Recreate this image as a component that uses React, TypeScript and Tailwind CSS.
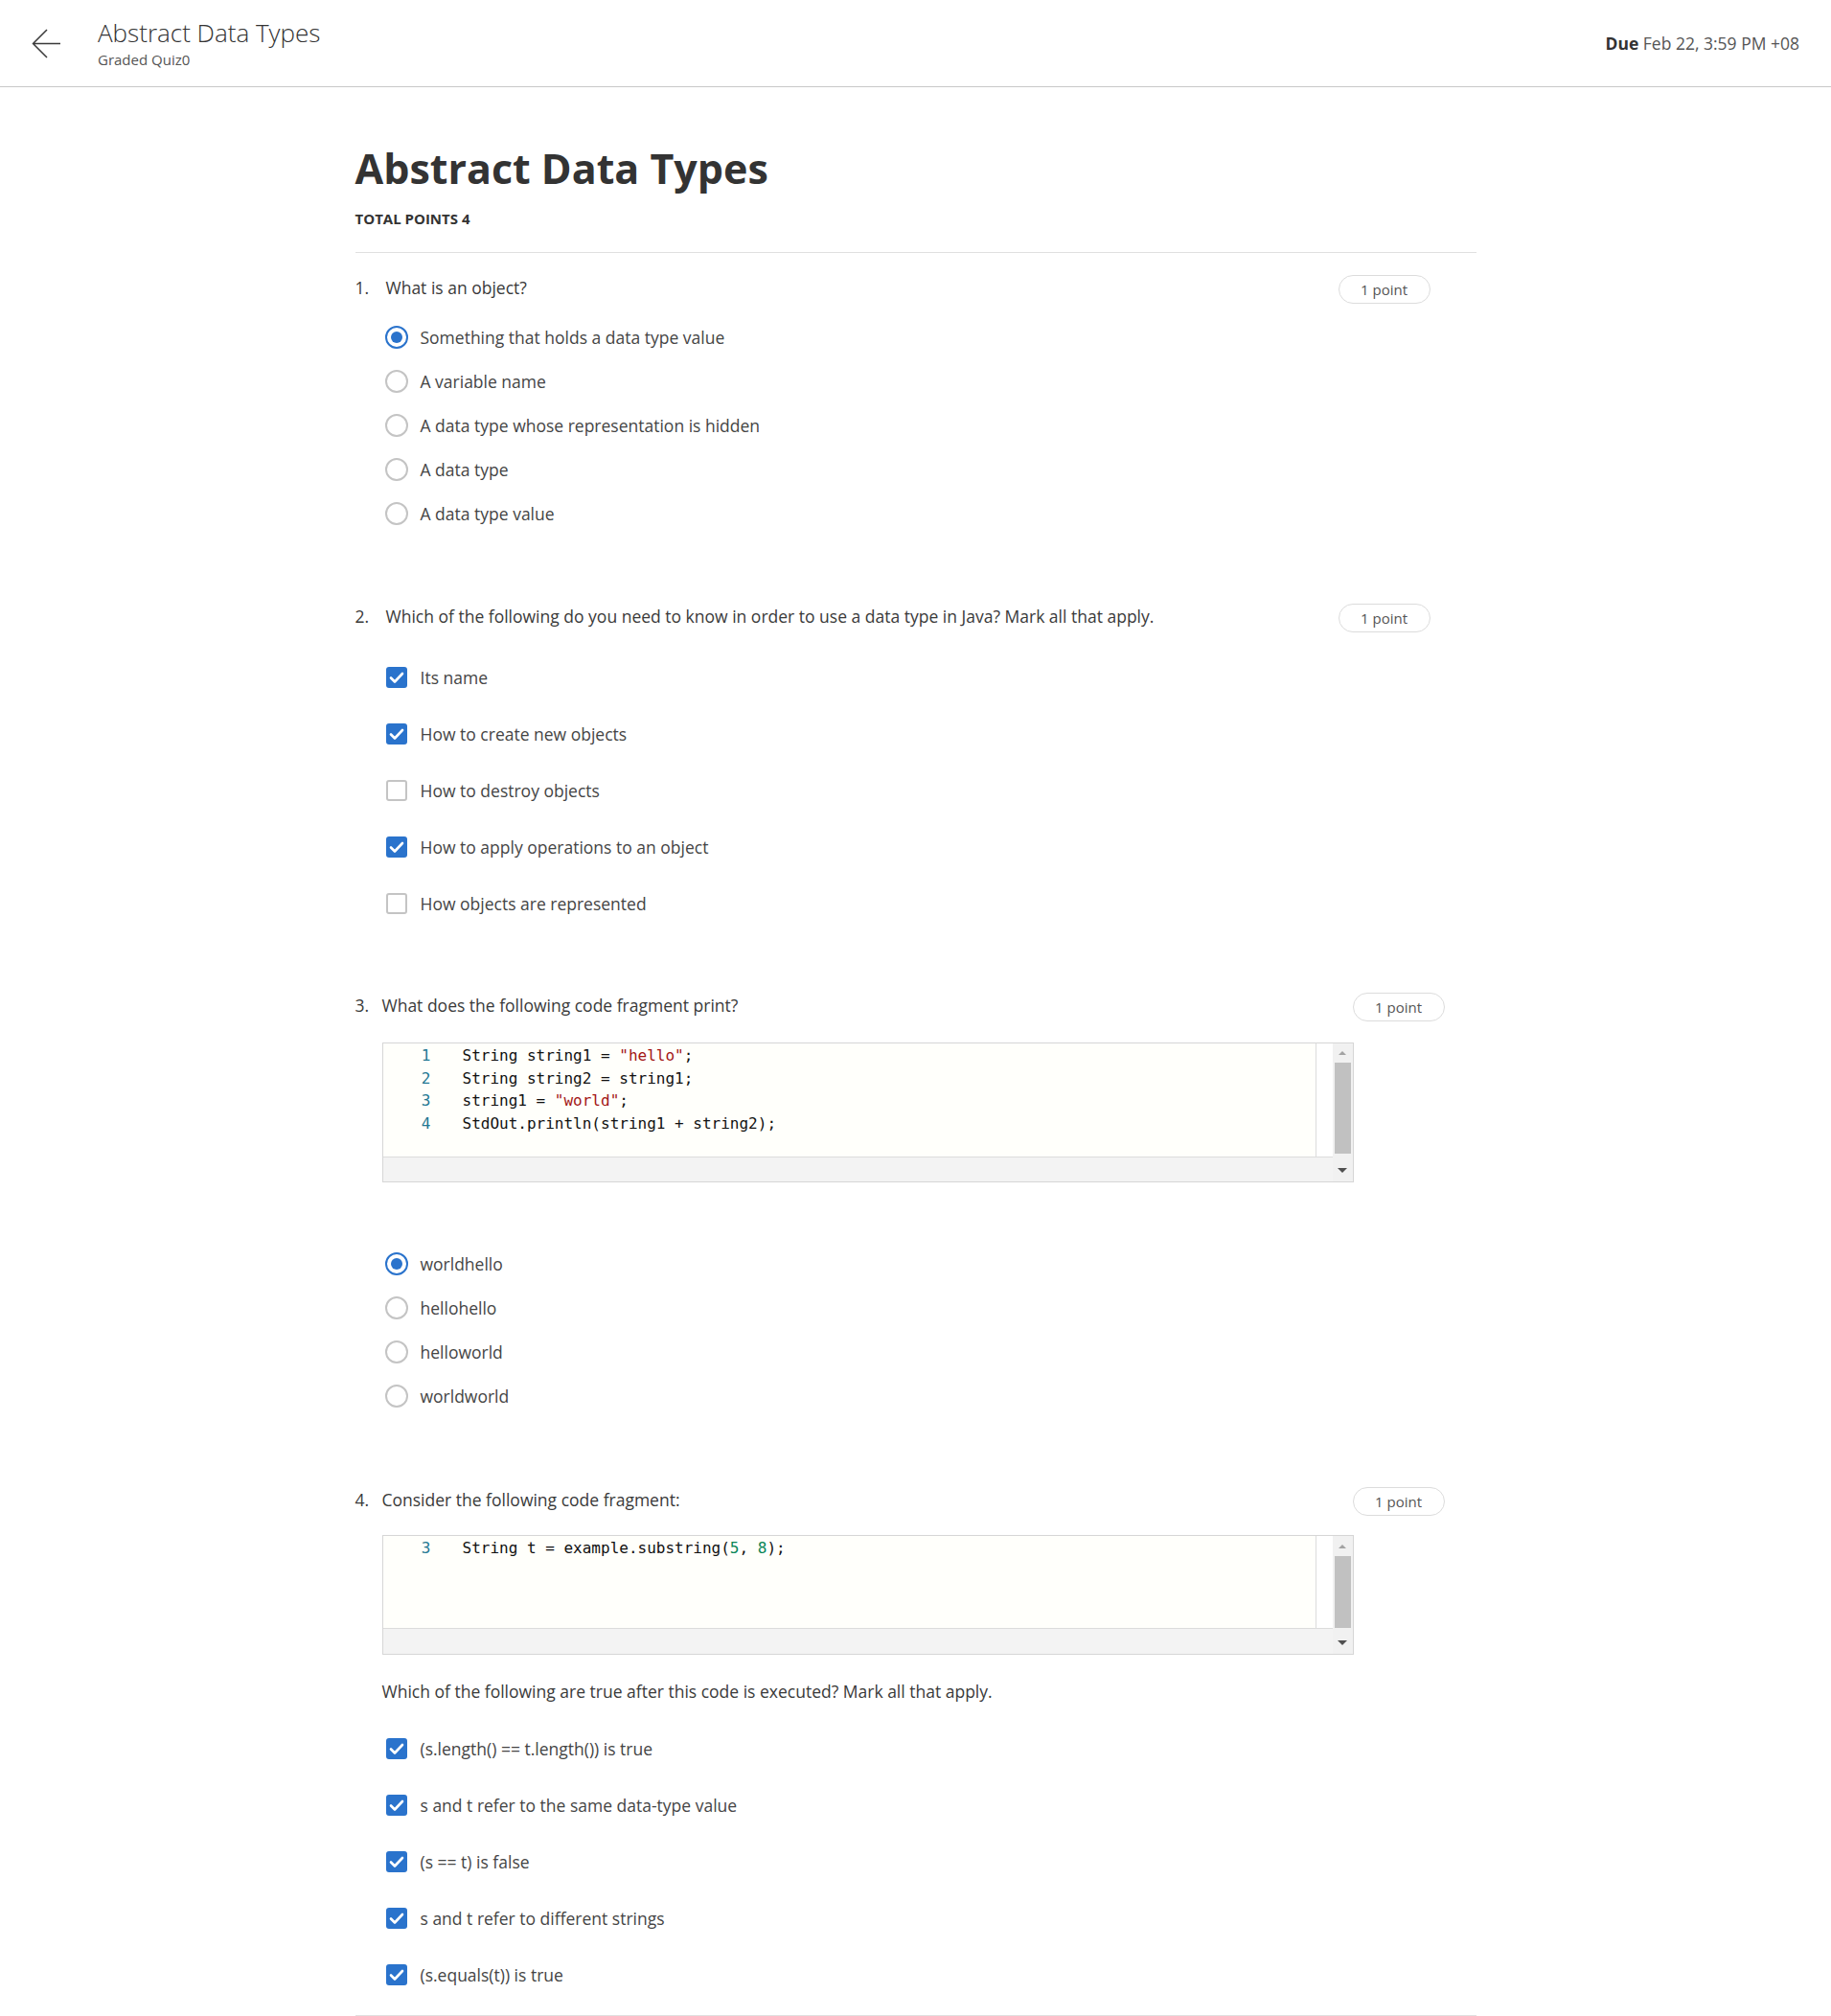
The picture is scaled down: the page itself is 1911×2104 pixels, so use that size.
import React from "react";

const FONT = "font-['Open_Sans',_'Noto_Sans',_sans-serif]";

function Radio({ checked }: { checked?: boolean }) {
  if (checked) {
    return (
      <span className="flex h-[24px] w-[24px] shrink-0 items-center justify-center rounded-full border-2 border-[#2a73cc] bg-white">
        <span className="h-[12px] w-[12px] rounded-full bg-[#2a73cc]" />
      </span>
    );
  }
  return <span className="h-[24px] w-[24px] shrink-0 rounded-full border-2 border-[#c4c4c4] bg-white" />;
}

function Checkbox({ checked }: { checked?: boolean }) {
  if (checked) {
    return (
      <span className="flex h-[22px] w-[22px] shrink-0 items-center justify-center rounded-[3px] bg-[#2a73cc]">
        <svg width="22" height="22" viewBox="0 0 22 22">
          <path d="M5 11.5 L9 15.5 L17 7" fill="none" stroke="#fff" strokeWidth="2.6" strokeLinecap="round" strokeLinejoin="round" />
        </svg>
      </span>
    );
  }
  return <span className="h-[22px] w-[22px] shrink-0 rounded-[3px] border-2 border-[#c4c4c4] bg-white" />;
}

function RadioRow({ label, checked }: { label: string; checked?: boolean }) {
  return (
    <div className="flex h-[46px] items-center pl-[31px]">
      <Radio checked={checked} />
      <span className="ml-[13px] text-[17.5px] leading-[24px] text-[#454545]">{label}</span>
    </div>
  );
}

function CheckRow({ label, checked }: { label: string; checked?: boolean }) {
  return (
    <div className="flex h-[59px] items-center pl-[32px]">
      <Checkbox checked={checked} />
      <span className="ml-[14px] text-[17.5px] leading-[24px] text-[#454545]">{label}</span>
    </div>
  );
}

function Pill() {
  return (
    <div className="-mt-[1px] flex h-[30px] w-[96px] shrink-0 items-center justify-center rounded-full border border-[#dcdcdc] text-[15px] text-[#555]">
      1 point
    </div>
  );
}

function QuestionRow({ num, text, wide }: { num: string; text: string; wide?: boolean }) {
  return (
    <div className="flex h-[24px] items-start justify-between">
      <div className="flex text-[17.5px] leading-[24px] text-[#3a3a3a]">
        <span className={wide ? "w-[32px]" : "w-[28px]"}>{num}</span>
        <span>{text}</span>
      </div>
      <div className={wide ? "mr-[48px]" : "mr-[33px]"}>
        <Pill />
      </div>
    </div>
  );
}

type CodeLine = { n: number; parts: { t: string; c?: string }[] };

function CodeBox({
  lines,
  contentH,
  barH,
  upH,
  thumbH,
  downPad,
}: {
  lines: CodeLine[];
  contentH: number;
  barH: number;
  upH: number;
  thumbH: number;
  downPad: number;
}) {
  return (
    <div className="ml-[28px] flex w-[1014px] border border-[#d6d6d6] shadow-[inset_0_2px_2px_rgba(0,0,0,0.06)]">
      <div className="flex flex-1 flex-col">
        <div className="flex" style={{ height: contentH }}>
          <div className="flex-1 border-r border-[#dcdcdc] bg-[#fffffb] pt-[1px] font-['DejaVu_Sans_Mono',_'Liberation_Mono',monospace] text-[16px] leading-[23.5px] text-[#111]">
            {lines.map((l) => (
              <div key={l.n} className="flex">
                <span className="w-[50px] text-right text-[#237893]">{l.n}</span>
                <span className="ml-[33px] whitespace-pre">
                  {l.parts.map((p, i) => (
                    <span key={i} style={p.c ? { color: p.c } : undefined}>
                      {p.t}
                    </span>
                  ))}
                </span>
              </div>
            ))}
          </div>
          <div className="w-[17px] bg-white" />
        </div>
        <div className="border-t border-[#dcdcdc] bg-[#f3f3f3]" style={{ height: barH }} />
      </div>
      <div className="flex w-[21px] flex-col bg-[#f1f1f1]">
        <div className="flex items-center justify-center" style={{ height: upH }}>
          <span className="h-0 w-0 border-x-[4px] border-b-[4px] border-x-transparent border-b-[#a3a3a3]" />
        </div>
        <div className="ml-[2px] w-[17px] bg-[#c1c1c1]" style={{ height: thumbH }} />
        <div className="flex flex-1 items-center justify-center" style={{ paddingTop: downPad }}>
          <span className="h-0 w-0 border-x-[5px] border-t-[5px] border-x-transparent border-t-[#505050]" />
        </div>
      </div>
    </div>
  );
}

export default function App() {
  const q3lines: CodeLine[] = [
    { n: 1, parts: [{ t: "String string1 = " }, { t: '"hello"', c: "#a31515" }, { t: ";" }] },
    { n: 2, parts: [{ t: "String string2 = string1;" }] },
    { n: 3, parts: [{ t: "string1 = " }, { t: '"world"', c: "#a31515" }, { t: ";" }] },
    { n: 4, parts: [{ t: "StdOut.println(string1 + string2);" }] },
  ];
  const q4lines: CodeLine[] = [
    {
      n: 3,
      parts: [
        { t: "String t = example.substring(" },
        { t: "5", c: "#098658" },
        { t: ", " },
        { t: "8", c: "#098658" },
        { t: ");" },
      ],
    },
  ];

  return (
    <div className={`h-[2104px] overflow-hidden bg-white ${FONT}`}>
      {/* Header */}
      <header className="flex h-[91px] items-center justify-between border-b border-[#c9c9c9] pl-[33px] pr-[33px]">
        <div className="flex items-center">
          <svg width="31" height="31" viewBox="0 0 31 31" className="shrink-0">
            <path d="M30 15.5 H1.5 M16 1 L1.5 15.5 L16 30" fill="none" stroke="#3a3a3a" strokeWidth="1.5" />
          </svg>
          <div className="ml-[38px] flex flex-col">
            <div className="text-[26px] font-light leading-[30px] text-[#333]">Abstract Data Types</div>
            <div className="mt-[3px] text-[15px] leading-[20px] text-[#555]">Graded Quiz0</div>
          </div>
        </div>
        <div className="text-[17.5px] leading-[24px] text-[#555]">
          <span className="font-bold text-[#333]">Due</span> Feb 22, 3:59 PM +08
        </div>
      </header>

      {/* Main */}
      <main className="mx-auto w-[1170px] pt-[59px]">
        <h1 className="text-[43px] font-bold leading-[52px] text-[#333]">Abstract Data Types</h1>
        <div className="mt-[16px] text-[15px] font-bold leading-[20px] text-[#333]">TOTAL POINTS 4</div>
        <div className="mt-[25px] h-px bg-[#e0e0e0]" />

        {/* Q1 */}
        <div className="mt-[24px]">
          <QuestionRow num="1." text="What is an object?" wide />
        </div>
        <div className="mt-[17px]">
          <RadioRow label="Something that holds a data type value" checked />
          <RadioRow label="A variable name" />
          <RadioRow label="A data type whose representation is hidden" />
          <RadioRow label="A data type" />
          <RadioRow label="A data type value" />
        </div>

        {/* Q2 */}
        <div className="mt-[72px]">
          <QuestionRow
            num="2."
            text="Which of the following do you need to know in order to use a data type in Java? Mark all that apply."
            wide
          />
        </div>
        <div className="mt-[22px]">
          <CheckRow label="Its name" checked />
          <CheckRow label="How to create new objects" checked />
          <CheckRow label="How to destroy objects" />
          <CheckRow label="How to apply operations to an object" checked />
          <CheckRow label="How objects are represented" />
        </div>

        {/* Q3 */}
        <div className="mt-[65px]">
          <QuestionRow num="3." text="What does the following code fragment print?" />
        </div>
        <div className="mt-[27px]">
          <CodeBox lines={q3lines} contentH={118} barH={26} upH={20} thumbH={95} downPad={6} />
        </div>
        <div className="mt-[62px]">
          <RadioRow label="worldhello" checked />
          <RadioRow label="hellohello" />
          <RadioRow label="helloworld" />
          <RadioRow label="worldworld" />
        </div>

        {/* Q4 */}
        <div className="mt-[73px]">
          <QuestionRow num="4." text="Consider the following code fragment:" />
        </div>
        <div className="mt-[25px]">
          <CodeBox lines={q4lines} contentH={96} barH={27} upH={21} thumbH={75} downPad={4} />
        </div>
        <div className="mt-[26px] pl-[28px] text-[17.5px] leading-[24px] text-[#3a3a3a]">
          Which of the following are true after this code is executed? Mark all that apply.
        </div>
        <div className="mt-[18px]">
          <CheckRow label="(s.length() == t.length()) is true" checked />
          <CheckRow label="s and t refer to the same data-type value" checked />
          <CheckRow label="(s == t) is false" checked />
          <CheckRow label="s and t refer to different strings" checked />
          <CheckRow label="(s.equals(t)) is true" checked />
        </div>
        <div className="mt-[13px] h-px bg-[#e0e0e0]" />
      </main>
    </div>
  );
}
